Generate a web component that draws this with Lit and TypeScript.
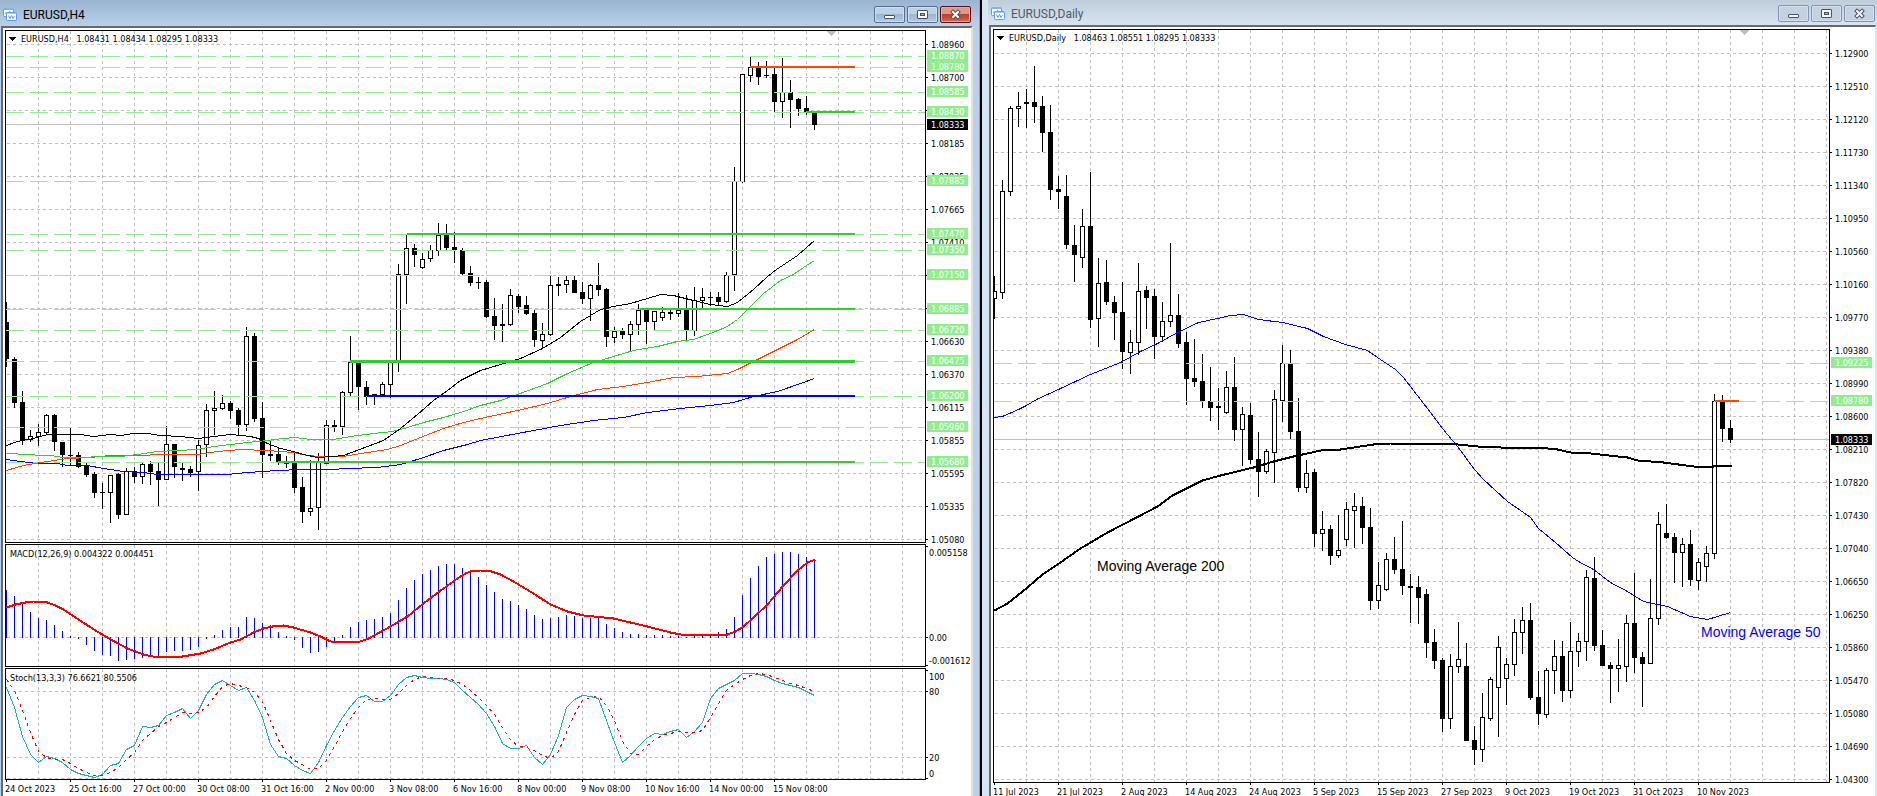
import { LitElement, html, svg, css, nothing } from "lit";
import { customElement, property } from "lit/decorators.js";
import { classMap } from "lit/directives/class-map.js";

/** high, low, body top, body bottom (pixel rows), 1 = falling bar */
type Bar = [number, number, number, number, number];
/** x, y pairs */
type Points = string;

interface Segment { x1: number; x2: number; y: number; width: number; color: string }
interface Average { points: Points; color: string; width: number }
interface Mark { text: string; y: number }
interface Note { text: string; x: number; y: number; color: string }

interface PaneSpec {
  /** window coordinates of the first pixel inside the border */
  x: number;
  y: number;
  height?: number;
  gridX: number;
  rows: number[];
  rowLabels?: Mark[];
  ticks?: number[];
  title: string;
  titleX: number;
  titleY: number;
  menu?: boolean;
  shiftX?: number;
  levels?: Mark[];
  bid?: Mark;
  bars?: Bar[];
  averages?: Average[];
  segments?: Segment[];
  histogram?: { zero: number; values: number[] };
  dashed?: Points;
  notes?: Note[];
  labelX: number;
}

interface WindowSpec {
  title: string;
  active: boolean;
  panes: PaneSpec[];
  times: string[];
}

const STEP = 8;
const LIME = "#32cd32";
const PALE = "#90ee90";
const ORANGE = "#ff4500";
const BLUE = "#0000ff";
const FAR = 4000;

const h4Bars: Bar[] = [
  [302,367,322,359,1],[357,408,359,403,1],[391,445,402,441,1],[430,442,436,440,0],[424,446,432,437,0],
  [414,434,415,433,0],[414,451,415,442,1],[442,467,442,455,1],[428,465,455,456,1],[452,468,455,467,1],
  [463,477,466,475,1],[472,498,474,493,1],[483,509,492,493,1],[475,523,475,493,0],[473,519,474,515,1],
  [468,515,471,515,0],[467,483,471,477,1],[463,484,464,477,0],[461,485,464,472,1],[463,506,471,480,1],
  [426,480,444,480,0],[444,478,444,467,1],[463,481,468,470,1],[466,477,469,473,1],[440,491,445,472,0],
  [404,457,410,445,0],[391,435,408,411,0],[395,410,403,409,0],[401,419,403,411,1],[408,435,410,425,1],
  [327,431,336,425,0],[333,422,336,419,1],[402,478,418,455,1],[440,461,454,456,1],[447,465,454,462,1],
  [456,468,461,464,1],[451,493,462,488,1],[477,523,487,512,1],[460,516,508,512,0],[453,530,462,508,0],
  [420,464,425,464,0],[420,432,425,427,1],[391,435,392,427,0],[336,396,362,393,0],[362,410,362,387,1],
  [381,405,387,397,1],[394,405,394,395,1],[382,395,384,395,0],[362,398,362,385,0],[264,372,274,361,0],
  [235,304,248,275,0],[244,267,248,255,1],[253,269,259,268,0],[245,262,250,259,0],[223,256,235,251,0],
  [224,250,235,248,1],[232,263,247,250,1],[248,275,250,274,1],[266,286,273,283,1],[277,289,282,283,1],
  [280,318,282,317,1],[298,340,316,326,1],[304,342,324,326,1],[289,326,295,325,0],[294,313,296,307,1],
  [296,315,305,314,1],[310,347,313,340,1],[323,349,334,341,0],[276,336,285,335,0],[277,296,284,286,1],
  [276,293,280,285,0],[276,293,280,293,1],[282,304,292,299,1],[284,321,285,299,0],[263,296,285,290,1],
  [288,347,289,337,1],[327,343,331,338,0],[328,339,331,335,1],[321,351,324,335,0],[304,335,310,325,0],
  [310,344,310,322,1],[311,330,311,322,0],[307,321,312,318,0],[310,320,312,314,1],[293,317,310,314,0],
  [295,340,310,330,1],[287,336,300,331,0],[288,308,297,301,0],[292,306,297,298,1],[292,306,297,302,1],
  [272,303,275,302,0],[167,291,181,275,0],[74,183,74,182,0],[57,82,67,76,0],[62,85,67,77,1],
  [61,78,75,76,1],[68,112,74,102,1],[58,118,92,102,0],[80,128,92,100,1],[98,116,99,109,1],
  [96,115,108,112,1],[112,130,113,125,1],
];

const dailyBars: Bar[] = [
  [276,319,291,299,0],[180,299,191,293,0],[106,196,108,192,0],[92,127,106,109,0],[89,128,102,104,1],
  [66,123,102,107,1],[96,152,106,133,1],[105,200,132,190,1],[176,209,189,192,1],[175,249,196,245,1],
  [225,282,245,255,1],[209,268,226,258,0],[172,328,226,320,1],[258,347,283,319,0],[260,305,282,302,1],
  [296,340,302,313,1],[282,369,312,352,1],[330,374,342,353,0],[263,355,291,343,0],[286,329,290,298,1],
  [289,359,296,337,1],[302,342,321,337,0],[243,327,315,322,0],[294,348,315,344,1],[332,405,342,379,1],
  [339,387,378,382,1],[354,408,381,401,1],[367,421,401,408,1],[388,430,406,408,1],[371,414,387,413,0],
  [357,441,387,430,1],[407,466,414,430,0],[403,464,415,460,1],[432,497,459,472,1],[449,474,451,472,0],
  [390,483,399,453,0],[345,422,363,401,0],[350,439,363,432,1],[398,492,431,488,1],[460,493,473,488,0],
  [469,547,472,534,1],[511,551,529,534,0],[525,565,529,556,1],[515,558,550,556,0],[502,546,509,540,0],
  [493,548,506,511,0],[497,544,506,528,1],[508,610,527,601,1],[562,609,585,601,0],[553,591,559,590,0],
  [537,574,559,570,1],[521,595,569,586,1],[574,623,586,588,1],[576,624,587,598,1],[589,658,594,643,1],
  [629,669,642,661,1],[658,732,660,719,1],[654,729,666,719,0],[622,673,659,667,0],[643,741,666,741,1],
  [726,765,740,750,1],[693,762,717,750,0],[677,721,679,719,0],[636,737,647,688,0],[658,705,664,679,0],
  [619,676,632,665,0],[607,654,620,633,0],[603,700,620,698,1],[671,725,697,714,1],[668,718,670,715,0],
  [640,694,656,671,0],[641,702,656,691,1],[622,698,651,691,0],[633,667,641,652,0],[570,661,577,642,0],
  [557,651,578,646,1],[630,666,645,666,1],[662,703,665,669,1],[639,692,665,669,0],[615,682,623,667,0],
  [573,673,623,658,1],[652,707,657,664,1],[579,664,618,664,0],[512,625,524,619,0],[504,539,533,538,1],
  [533,583,537,553,1],[538,587,544,553,0],[530,586,544,580,1],[558,590,562,581,0],[546,582,553,567,0],
  [394,559,401,554,0],[395,442,401,429,1],[420,443,428,440,1],
];

const macd = [
  47,41,33,25,19,17,12,6,1,-1,-7,-13,-17,-18,-23,-22,-21,-20,-19,-18,-14,-13,-13,-12,-9,-1,2,7,10,10,
  20,19,14,12,5,1,-2,-10,-15,-14,-9,-4,2,10,15,17,18,20,24,37,49,57,63,67,71,73,73,69,65,60,
  52,45,38,36,32,28,22,18,19,20,22,21,19,19,19,13,9,5,3,3,2,2,2,1,1,0,1,2,3,5,
  8,20,42,59,71,80,83,85,85,83,80,76,
];

const stochMain = [
  687,707,736,754,762,756,758,762,769,773,775,777,774,765,763,749,745,726,727,725,715,712,708,718,710,694,684,680,685,690,
  687,700,717,744,756,758,765,770,773,762,745,730,717,706,697,695,701,701,695,684,677,675,677,678,678,679,682,690,697,704,
  713,726,743,748,748,745,757,764,754,735,707,699,695,696,698,720,742,762,755,746,738,733,734,731,729,737,731,722,698,688,
  684,680,673,673,674,676,680,683,685,687,691,695,
];

const along = (values: number[], x0: number): Points =>
  values.map((v, i) => `${x0 + i * STEP},${v}`).join(" ");

/** The %D line is the three-bar mean of %K; two earlier bars seed it. */
const seeded = [674, 676, ...stochMain];
const stochSignal = stochMain.map((_, i) => Math.round((seeded[i] + seeded[i + 1] + seeded[i + 2]) / 3));

const scale = (y0: number, labels: string[]): Mark[] => labels.map((text, i) => ({ text, y: y0 + i * 33 }));

const h4Scale = scale(44, [
  "1.08960","1.08700","1.08440","1.08185","1.07925","1.07665","1.07410","1.07150","1.06890",
  "1.06630","1.06370","1.06115","1.05855","1.05595","1.05335","1.05080",
]);
const dailyScale = scale(53, [
  "1.12900","1.12510","1.12120","1.11730","1.11340","1.10950","1.10560","1.10160","1.09770","1.09380","1.08990","1.08600",
  "1.08210","1.07820","1.07430","1.07040","1.06650","1.06250","1.05860","1.05470","1.05080","1.04690","1.04300",
]);

const windows: WindowSpec[] = [
  {
    title: "EURUSD,H4",
    active: true,
    times: [
      "24 Oct 2023","25 Oct 16:00","27 Oct 00:00","30 Oct 08:00","31 Oct 16:00","2 Nov 00:00","3 Nov 08:00",
      "6 Nov 16:00","8 Nov 00:00","9 Nov 08:00","10 Nov 16:00","14 Nov 00:00","15 Nov 08:00",
    ],
    panes: [
      {
        x: 6, y: 31, gridX: 38, labelX: 5,
        rows: h4Scale.map((m) => m.y), rowLabels: h4Scale, ticks: h4Scale.map((m) => m.y),
        title: "EURUSD,H4\u00a0\u00a0 1.08431 1.08434 1.08295 1.08333", titleX: 21, titleY: 42, menu: true, shiftX: 831,
        bid: { text: "1.08333", y: 124 },
        levels: [
          { text: "1.08870", y: 56 }, { text: "1.08780", y: 67 }, { text: "1.08585", y: 92 }, { text: "1.08430", y: 112 },
          { text: "1.07885", y: 181 }, { text: "1.07470", y: 234 }, { text: "1.07350", y: 250 }, { text: "1.07150", y: 275 },
          { text: "1.06885", y: 309 }, { text: "1.06720", y: 330 }, { text: "1.06475", y: 361 }, { text: "1.06200", y: 396 },
          { text: "1.05960", y: 427 }, { text: "1.05680", y: 462 },
        ],
        bars: h4Bars,
        averages: [
          { color: BLUE, width: 1, points: "6,459 20,461 37,463 57,463 67,465 87,465 103,468 123,471 143,472 157,474 227,474 247,472 277,470 300,469 330,469 347,468 377,467 400,464 420,458 443,450 467,444 480,440 517,433 560,425 593,420 623,417 647,412 680,408 710,405 733,402 753,396 777,391 800,383 814,378" },
          { color: ORANGE, width: 1, points: "6,470 23,465 40,462 67,458 90,457 110,455 143,455 157,454 197,454 217,451 240,449 267,450 293,452 307,455 320,456 343,456 367,452 387,449 400,445 420,437 443,428 463,422 480,418 517,410 547,403 570,396 597,389 623,386 647,382 673,377 697,376 727,373 737,369 753,361 773,351 797,339 814,329" },
          { color: LIME, width: 1, points: "6,453 28,454 40,455 50,455 62,457 120,456 137,454 157,451 177,450 197,449 213,446 230,444 247,442 267,440 283,438 295,437 310,439 333,439 350,436 373,433 392,431 407,427 423,422 443,417 460,412 480,405 500,400 517,394 547,383 567,373 593,362 613,356 633,350 657,346 677,341 693,339 710,333 727,326 737,319 747,309 763,293 780,280 793,274 806,265 814,260" },
          { color: "#000", width: 1, points: "6,445 17,441 33,438 47,434 80,434 93,436 110,434 120,435 133,433 147,433 160,435 180,436 198,438 213,436 230,434 250,436 258,438 267,443 280,448 293,451 303,454 317,457 333,456 343,455 367,446 383,440 400,428 417,414 433,400 447,390 460,380 480,370 500,364 520,358 542,348 560,337 580,321 600,309 613,306 630,303 647,298 660,294 673,295 693,300 710,304 727,306 737,302 753,289 767,276 776,269 797,255 814,240" },
        ],
        segments: [
          { x1: 750, x2: 855, y: 66, width: 2, color: ORANGE },
          { x1: 806, x2: 855, y: 111, width: 2, color: LIME },
          { x1: 407, x2: 855, y: 233, width: 2, color: LIME },
          { x1: 640, x2: 855, y: 308, width: 2, color: LIME },
          { x1: 350, x2: 855, y: 360, width: 3, color: LIME },
          { x1: 367, x2: 855, y: 395, width: 2, color: BLUE },
          { x1: 278, x2: 855, y: 461, width: 2, color: LIME },
        ],
      },
      {
        x: 6, y: 545, height: 123, gridX: 38, labelX: 3, rows: [637],
        title: "MACD(12,26,9) 0.004322 0.004451", titleX: 10, titleY: 557,
        rowLabels: [{ text: "0.005158", y: 552 }, { text: "0.00", y: 637 }, { text: "-0.001612", y: 660 }],
        ticks: [546, 637, 665],
        histogram: { zero: 637, values: macd },
        averages: [
          { color: "#ff0000", width: 2, points: "6,607 15,604 25,602 33,601 47,602 55,605 63,609 78,619 95,630 112,640 127,648 143,654 152,656 182,656 200,653 213,649 230,642 240,639 253,632 263,628 272,626 283,625 293,627 310,632 320,636 330,641 340,642 360,641 368,638 390,626 407,616 423,603 443,588 457,578 465,573 470,571 480,570 488,570 500,574 513,581 533,593 550,604 567,611 583,615 613,618 647,626 670,632 680,634 727,634 735,631 743,626 753,617 767,604 783,585 797,570 807,562 815,559" },
        ],
      },
      {
        x: 6, y: 669, height: 112, gridX: 38, labelX: 3, rows: [691, 757, 778],
        title: "Stoch(13,3,3) 76.6621 80.5506", titleX: 10, titleY: 681,
        rowLabels: [{ text: "100", y: 676 }, { text: "80", y: 691 }, { text: "20", y: 757 }, { text: "0", y: 773 }],
        ticks: [670, 691, 757, 778],
        averages: [{ color: "#20b2aa", width: 1, points: along(stochMain, 6) }],
        dashed: along(stochSignal, 6),
      },
    ],
  },
  {
    title: "EURUSD,Daily",
    active: false,
    times: [
      "11 Jul 2023","21 Jul 2023","2 Aug 2023","14 Aug 2023","24 Aug 2023","5 Sep 2023",
      "15 Sep 2023","27 Sep 2023","9 Oct 2023","19 Oct 2023","31 Oct 2023","10 Nov 2023",
    ],
    panes: [
      {
        x: 994, y: 30, gridX: 1026, labelX: 5,
        rows: dailyScale.map((m) => m.y), rowLabels: dailyScale, ticks: dailyScale.map((m) => m.y),
        title: "EURUSD,Daily\u00a0\u00a0 1.08463 1.08551 1.08295 1.08333", titleX: 1009, titleY: 41, menu: true, shiftX: 1744,
        bid: { text: "1.08333", y: 439 },
        levels: [{ text: "1.09225", y: 363 }, { text: "1.08780", y: 401 }],
        bars: dailyBars,
        averages: [
          { color: BLUE, width: 1, points: "994,417 1002,416 1018,409 1026,405 1036,399 1060,388 1090,374 1120,362 1140,351 1157,343 1177,332 1198,322 1217,318 1230,315 1243,314 1258,319 1282,322 1307,328 1323,336 1345,344 1367,350 1380,359 1395,369 1403,377 1420,399 1430,412 1442,428 1457,446 1474,469 1483,479 1507,501 1523,512 1530,517 1538,528 1555,542 1572,557 1578,561 1593,569 1610,582 1627,591 1643,601 1652,603 1667,606 1690,616 1707,619 1717,616 1730,612" },
          { color: "#000", width: 2, points: "994,610 1007,603 1027,587 1042,574 1060,562 1080,548 1107,532 1138,516 1157,506 1172,495 1188,487 1202,480 1220,475 1253,467 1273,461 1293,456 1325,449 1340,449 1373,444 1390,443 1447,443 1477,446 1500,447 1537,447 1557,449 1570,452 1590,453 1627,457 1637,460 1663,462 1693,466 1713,466 1717,465 1731,465" },
        ],
        segments: [{ x1: 1715, x2: 1739, y: 400, width: 2, color: ORANGE }],
        notes: [
          { text: "Moving Average 200", x: 1097, y: 571, color: "#000" },
          { text: "Moving Average 50", x: 1701, y: 637, color: BLUE },
        ],
      },
    ],
  },
];

@customElement("chart-pane")
export class ChartPane extends LitElement {
  @property({ attribute: false }) spec!: PaneSpec;

  static styles = css`
    :host { display: flex; min-height: 0; }
    .plot {
      flex: 1; min-width: 0; box-sizing: border-box;
      border: 1px solid #000; overflow: hidden; background: #fff;
    }
    .axis { flex: none; width: 45px; }
    svg { display: block; width: 100%; height: 100%; }
    .axis svg { overflow: visible; }
    .crisp { shape-rendering: crispEdges; }
    .grid { stroke: #c0c0c0; stroke-dasharray: 3 3; fill: none; }
    .level { stroke: #90ee90; stroke-dasharray: 18 6; fill: none; }
    .bid { fill: #c0c0c0; }
    .rise { fill: #fff; stroke: #000; }
    .line { fill: none; stroke-linejoin: round; }
    .signal { fill: none; stroke: #ff0000; stroke-dasharray: 3 4; }
    text {
      font-family: "DejaVu Sans Condensed", "Noto Sans", sans-serif;
      font-size: 9px; fill: #000; white-space: pre;
    }
    .note { font-family: "Liberation Sans", Arial, sans-serif; font-size: 14px; }
    .light { fill: #fff; }
  `;

  private bar([high, low, top, bottom, falling]: Bar, i: number) {
    const x = this.spec.x + i * STEP;
    return svg`
      <rect x=${x} y=${high} width="1" height=${low - high}></rect>
      ${falling
        ? svg`<rect x=${x - 2} y=${top} width="5" height=${bottom - top}></rect>`
        : svg`<rect class="rise" x=${x - 1.5} y=${top + 0.5} width="4" height=${Math.max(bottom - top - 1, 1)}></rect>`}
    `;
  }

  private column(value: number, i: number) {
    const zero = this.spec.histogram!.zero;
    const x = this.spec.x + i * STEP;
    return svg`<rect x=${x} y=${value > 0 ? zero - value : zero} width="1" height=${Math.abs(value) + 1}></rect>`;
  }

  render() {
    const s = this.spec;
    const verticals = Array.from({ length: 60 }, (_, k) => s.gridX + k * 32);
    return html`
      <div class="plot">
        <svg role="img" aria-label=${s.title}>
          <g transform="translate(${-s.x} ${-s.y})">
            <g class="crisp">
              <g class="grid">
                ${verticals.map((x) => svg`<path d="M${x + 0.5} ${s.y} V${FAR}"></path>`)}
                ${s.rows.map((y) => svg`<path d="M${s.x + 1} ${y + 0.5} H${FAR}"></path>`)}
              </g>
              ${s.bid ? svg`<rect class="bid" x=${s.x} y=${s.bid.y} width=${FAR} height="1"></rect>` : nothing}
              ${s.bars ? svg`<g>${s.bars.map((b, i) => this.bar(b, i))}</g>` : nothing}
              ${s.histogram ? svg`<g fill=${BLUE}>${s.histogram.values.map((v, i) => this.column(v, i))}</g>` : nothing}
              <g class="level">
                ${(s.levels ?? []).map((l) => svg`<path d="M${s.x} ${l.y + 0.5} H${FAR}"></path>`)}
              </g>
              <g transform="translate(0.5 0.5)">
                ${(s.averages ?? []).map((a) => svg`<polyline class="line" points=${a.points} stroke=${a.color} stroke-width=${a.width}></polyline>`)}
                ${s.dashed ? svg`<polyline class="signal" points=${s.dashed}></polyline>` : nothing}
              </g>
              ${(s.segments ?? []).map((g) => svg`<rect x=${g.x1} y=${g.y} width=${g.x2 - g.x1} height=${g.width} fill=${g.color}></rect>`)}
              ${s.menu ? svg`<path d="M${s.x + 3} ${s.y + 6} h7 l-3.5 4 z"></path>` : nothing}
              ${s.shiftX ? svg`<path fill="#c0c0c0" d="M${s.shiftX - 4} ${s.y} h9 v1 l-4.5 4 l-4.5 -4 z"></path>` : nothing}
            </g>
            <text x=${s.titleX} y=${s.titleY}>${s.title}</text>
            ${(s.notes ?? []).map((n) => svg`<text class="note" x=${n.x} y=${n.y} style="fill:${n.color}">${n.text}</text>`)}
          </g>
        </svg>
      </div>
      <div class="axis">
        <svg>
          <g transform="translate(0 ${1 - s.y})">
            ${(s.ticks ?? []).map((y) => svg`<rect y=${y} width="2" height="1"></rect>`)}
            ${(s.rowLabels ?? []).map((m) => svg`<text x=${s.labelX} y=${m.y + 4}>${m.text}</text>`)}
            ${(s.levels ?? []).map((m) => svg`
              <rect x="1" y=${m.y - 6} width="41" height="11" fill=${PALE}></rect>
              <text class="light" x=${s.labelX} y=${m.y + 3}>${m.text}</text>`)}
            ${s.bid ? svg`
              <rect x="1" y=${s.bid.y - 5} width="41" height="11"></rect>
              <text class="light" x=${s.labelX} y=${s.bid.y + 4}>${s.bid.text}</text>` : nothing}
          </g>
        </svg>
      </div>
    `;
  }
}

@customElement("chart-window")
export class ChartWindow extends LitElement {
  @property({ attribute: false }) spec!: WindowSpec;

  static styles = css`
    :host { display: flex; min-width: 0; min-height: 0; }
    .window { flex: 1; min-width: 0; display: flex; flex-direction: column; background: #d7e4f2; padding: 0 0 0 7px; }
    .window.active { background: #b9d1ea; padding: 0 6px 0 1px; border-right: 1px solid #35c5f0; }
    .bar {
      flex: none; display: flex; align-items: center; box-sizing: border-box;
      height: 25px; padding: 2px 2px 0 3px; margin-left: -1px;
      background: linear-gradient(#bfcddb, #d7e4f2);
    }
    .active .bar { height: 26px; padding: 3px 8px 0 3px; margin-right: -6px; background: linear-gradient(#99b4d1, #b9d1ea); }
    .icon { flex: none; width: 15px; height: 15px; }
    h2 {
      flex: 1; margin: 0 0 0 5px; font: 400 12px/16px Roboto, "Open Sans", sans-serif;
      color: #505a64; white-space: nowrap;
    }
    .active h2 { color: #000; }
    .controls { display: flex; gap: 2px; }
    button {
      display: grid; place-items: center; box-sizing: border-box; width: 31px; height: 17px; padding: 0;
      border: 1px solid #8493b3; border-radius: 2px;
      box-shadow: inset 0 0 0 1px #d6e0ec; background: #c3d1e1;
    }
    .active button {
      border-color: #566d92; box-shadow: inset 0 0 0 1px #cfdff0;
      background: linear-gradient(#bdd0e5 50%, #9bb4d0 50%, #b4cbe4);
    }
    .active button.close {
      border-color: #5a0f1c; box-shadow: inset 0 0 0 1px #e3a99b;
      background: linear-gradient(#dc9a8a 45%, #bf3f28 50%, #cf6a50);
    }
    button svg { display: block; width: 13px; height: 11px; }
    .client {
      flex: 1; min-height: 0; display: flex; flex-direction: column; gap: 1px; background: #fff;
      box-sizing: border-box; padding: 2px 0 0 2px;
      border-style: solid; border-width: 2px 1px 0 2px;
      border-color: #696969 #e3e3e3 #e3e3e3 #696969;
      margin-right: 1px;
    }
    .active .client { margin-right: 0; border-right-width: 2px; }
    .main { flex: 1; }
    .study { flex: none; }
    .times { flex: none; height: 16px; margin-top: -1px; }
    .times.short { height: 13px; }
    .times svg { display: block; width: 100%; height: 100%; overflow: hidden; }
    .times text { font-family: "DejaVu Sans Condensed", "Noto Sans", sans-serif; font-size: 9px; fill: #000; }
  `;

  private get glyphFill() {
    return this.spec.active ? "#fff" : "#f4f7fa";
  }

  private icon() {
    return html`<svg class="icon" viewBox="0 0 15 15" aria-hidden="true">
      <rect x="0.5" y="1.5" width="10" height="8" rx="1" fill="#fff" stroke="#5b9bf3"></rect>
      <path d="M1 1h9v2H1z" fill="#7db2f8"></path>
      <path d="M2 7l1.5-2 1.500 1.500 1.500-2 1.500 1" fill="none" stroke="#5b9bf3"></path>
      <rect x="3.5" y="5.5" width="10" height="8" rx="1" fill="#fff" stroke="#5b9bf3"></rect>
      <path d="M4 6h9v1H4z" fill="#a9cbfa"></path>
      <path d="M5.5 8.5l1.500 3 1.500-3 1.500 3 1.500-2.500" fill="none" stroke="#5b9bf3"></path>
    </svg>`;
  }

  render() {
    const s = this.spec;
    return html`
      <section class=${classMap({ window: true, active: s.active })} aria-label=${s.title}>
        <header class="bar">
          ${this.icon()}
          <h2>${s.title}</h2>
          <div class="controls">
            <button type="button" aria-label="Minimize">
              <svg viewBox="0 0 13 11"><rect x="1.5" y="6.5" width="10" height="3" rx="0.5" fill=${this.glyphFill} stroke="#4c5066"></rect></svg>
            </button>
            <button type="button" aria-label="Maximize">
              <svg viewBox="0 0 13 11">
                <rect x="1.5" y="1.5" width="10" height="8" rx="0.5" fill=${this.glyphFill} stroke="#4c5066"></rect>
                <rect x="4.5" y="4.5" width="4" height="2" fill="#9fb4d8" stroke="#4c5066"></rect>
              </svg>
            </button>
            <button type="button" class="close" aria-label="Close">
              <svg viewBox="0 0 13 11">
                <path d="M4 3l5 5M9 3l-5 5" stroke="#4c5066" stroke-width="4" stroke-linecap="square"></path>
                <path d="M4 3l5 5M9 3l-5 5" stroke=${this.glyphFill} stroke-width="2" stroke-linecap="square"></path>
              </svg>
            </button>
          </div>
        </header>
        <div class="client">
          ${s.panes.map((p) => html`
            <chart-pane class=${p.height ? "study" : "main"} style=${p.height ? `height:${p.height}px` : ""} .spec=${p}></chart-pane>`)}
          <div class=${classMap({ times: true, short: !s.active })}>
            <svg>
              ${s.times.map((t, i) => svg`
                <rect x=${1 + i * 64} y="0" width="1" height="2"></rect>
                <text x=${i * 64} y="12">${t}</text>`)}
            </svg>
          </div>
        </div>
      </section>
    `;
  }
}

@customElement("app-root")
export class AppRoot extends LitElement {
  static styles = css`
    :host { display: flex; gap: 2px; height: 100vh; background: #000; overflow: hidden; }
    .wide { flex: 980 1 0; }
    .narrow { flex: 895 1 0; }
  `;

  render() {
    return html`${windows.map((w) => html`
      <chart-window class=${w.active ? "wide" : "narrow"} .spec=${w}></chart-window>`)}`;
  }
}
